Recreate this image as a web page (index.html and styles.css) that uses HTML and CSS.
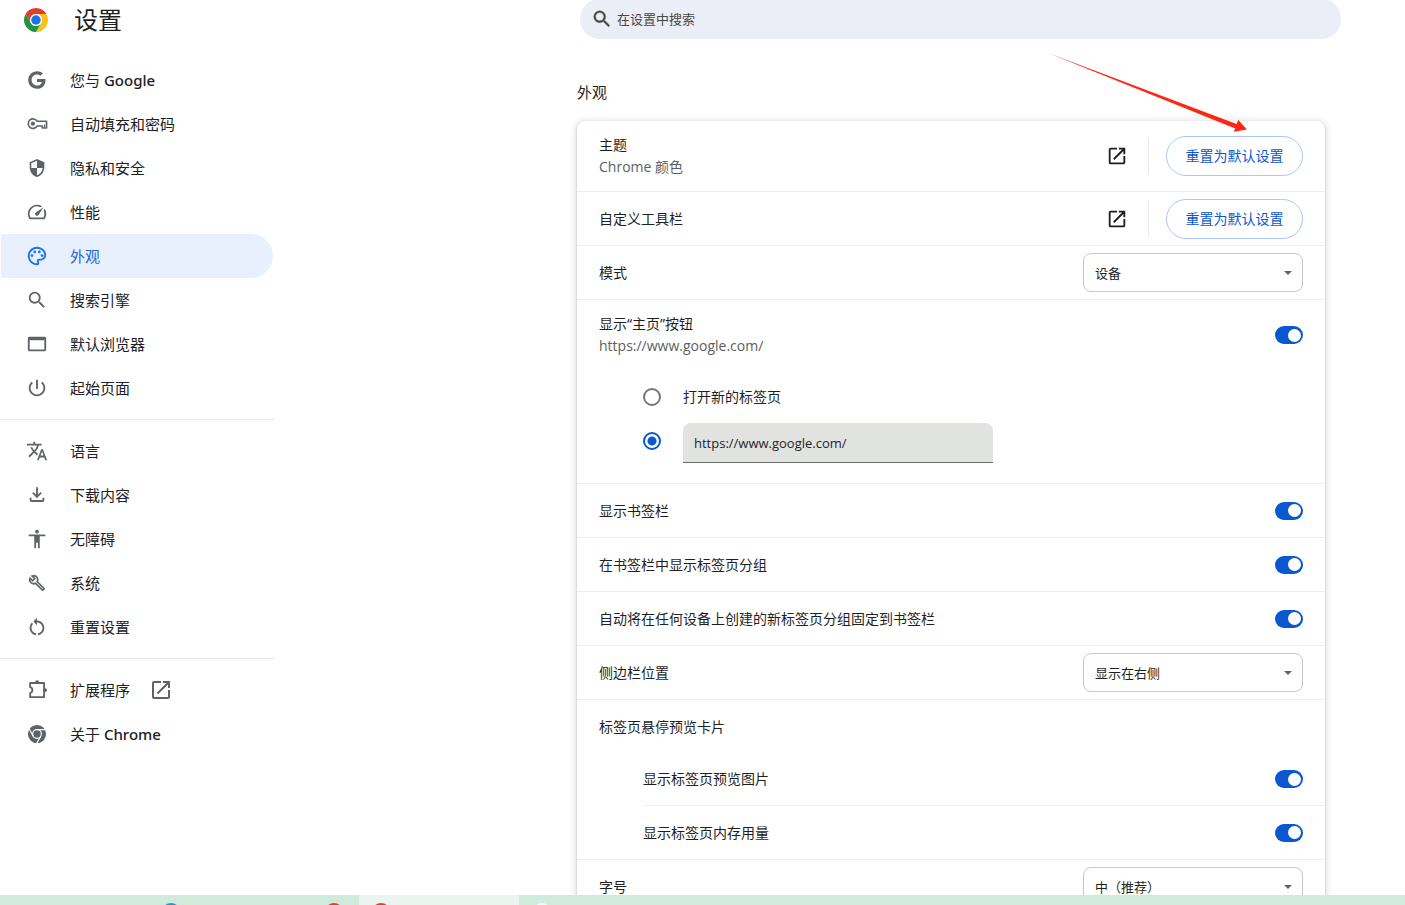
FILE: index.html
```html
<!DOCTYPE html>
<html lang="zh-CN">
<head>
<meta charset="utf-8">
<title>设置</title>
<link rel="stylesheet" href="styles.css">
</head>
<body>
<svg class="sprite" aria-hidden="true">
  <symbol id="open" viewBox="0 0 24 24"><path d="M19 19H5V5h7V3H5a2 2 0 0 0-2 2v14a2 2 0 0 0 2 2h14c1.1 0 2-.9 2-2v-7h-2v7zM14 3v2h3.59l-9.83 9.83 1.41 1.41L19 6.41V10h2V3h-7z"/></symbol>
  <symbol id="search" viewBox="0 0 24 24"><path d="M15.5 14h-.79l-.28-.27A6.47 6.47 0 0 0 16 9.5 6.5 6.5 0 1 0 9.5 16c1.61 0 3.09-.59 4.23-1.57l.27.28v.79l5 4.99L20.49 19l-4.99-5zm-6 0C7.01 14 5 11.99 5 9.5S7.01 5 9.5 5 14 7.01 14 9.5 11.99 14 9.5 14z"/></symbol>
</svg>
<div class="window">
  <header class="topbar">
    <div class="brand">
      <svg class="logo" viewBox="0 0 48 48" aria-hidden="true">
        <path fill="#e33b2e" d="M44.78 12A24 24 0 0 0 3.22 12L13.61 30A12 12 0 0 1 24 12z"/>
        <path fill="#fbc116" d="M44.78 12A24 24 0 0 1 24 48L34.39 30A12 12 0 0 0 24 12z"/>
        <path fill="#229342" d="M3.22 12A24 24 0 0 0 24 48L34.39 30A12 12 0 0 1 13.61 30z"/>
        <circle cx="24" cy="24" r="12" fill="#fff"/><circle cx="24" cy="24" r="9.5" fill="#1a73e8"/>
      </svg>
      <h1 class="title">设置</h1>
    </div>
    <div class="search-area">
      <label class="search">
        <svg class="search-icon" aria-hidden="true"><use href="#search"/></svg>
        <input class="search-input" type="search" placeholder="在设置中搜索" aria-label="在设置中搜索">
      </label>
    </div>
  </header>

  <div class="body">
    <nav class="menu" aria-label="设置">
      <a class="item" href="#google"><svg class="icon" viewBox="-1 -1 20 20"><path d="M16.58 8H9v2.75h4.47c-.24 1.2-1.42 3.27-4.47 3.27-2.72 0-4.93-2.25-4.93-5.02S6.28 3.98 9 3.98c1.54 0 2.57.66 3.17 1.22l2.19-2.12C12.97 1.79 11.16 1 9 1 4.58 1 1 4.58 1 9s3.58 8 8 8c4.62 0 7.68-3.25 7.68-7.82 0-.46-.04-.83-.1-1.18z"/></svg><span>您与 <span class="latin">Google</span></span></a>
      <a class="item" href="#autofill"><svg class="icon" viewBox="0 0 24 24"><g fill="none" stroke="currentColor" stroke-width="1.8"><path d="M12.2 9H22.4V16.4H17.8V14.2H12.2A5.2 5.2 0 1 1 12.2 9z" stroke-linejoin="round"/><path d="M20.2 12.5V16" stroke-width="1.2"/></g><circle cx="7.5" cy="11.6" r="2.3"/></svg><span>自动填充和密码</span></a>
      <a class="item" href="#privacy"><svg class="icon" viewBox="-1.5 -1.5 27 27"><path d="M12 1L3 5v6c0 5.55 3.84 10.74 9 12 5.16-1.26 9-6.45 9-12V5l-9-4zm0 10.99h7c-.53 4.12-3.28 7.79-7 8.94V12H5V6.3l7-3.11v8.8z"/></svg><span>隐私和安全</span></a>
      <a class="item" href="#performance"><svg class="icon" viewBox="0 0 24 24"><path d="M20.38 8.57l-1.23 1.85a8 8 0 0 1-.22 7.58H5.07A8 8 0 0 1 15.58 6.85l1.85-1.23A10 10 0 0 0 3.35 19a2 2 0 0 0 1.72 1h13.85a2 2 0 0 0 1.74-1 10 10 0 0 0-.27-10.44zm-9.79 6.84a2 2 0 0 0 2.83 0l5.66-8.49-8.49 5.66a2 2 0 0 0 0 2.83z"/></svg><span>性能</span></a>
      <a class="item item-active" href="#appearance" aria-current="page"><svg class="icon" viewBox="0 0 24 24"><path d="M12 22C6.49 22 2 17.51 2 12S6.49 2 12 2s10 4.04 10 9c0 3.31-2.69 6-6 6h-1.77c-.28 0-.5.22-.5.5 0 .12.05.23.13.33.41.47.64 1.06.64 1.67A2.5 2.5 0 0 1 12 22zm0-18c-4.41 0-8 3.59-8 8s3.59 8 8 8c.28 0 .5-.22.5-.5a.54.54 0 0 0-.14-.35c-.41-.46-.63-1.05-.63-1.65a2.5 2.5 0 0 1 2.5-2.5H16c2.21 0 4-1.79 4-4 0-3.86-3.59-7-8-7z"/><circle cx="6.5" cy="11.5" r="1.5"/><circle cx="9.5" cy="7.5" r="1.5"/><circle cx="14.5" cy="7.5" r="1.5"/><circle cx="17.5" cy="11.5" r="1.5"/></svg><span>外观</span></a>
      <a class="item" href="#engine"><svg class="icon"><use href="#search"/></svg><span>搜索引擎</span></a>
      <a class="item" href="#browser"><svg class="icon" viewBox="0 0 24 24"><path d="M20 4H4c-1.1 0-2 .9-2 2v12c0 1.1.9 2 2 2h16c1.1 0 2-.9 2-2V6c0-1.1-.9-2-2-2zm0 14H4V8h16v10z"/></svg><span>默认浏览器</span></a>
      <a class="item" href="#startup"><svg class="icon" viewBox="0 0 24 24"><path d="M13 3h-2v10h2V3zm4.83 2.17l-1.42 1.42C17.99 7.86 19 9.81 19 12c0 3.87-3.13 7-7 7s-7-3.13-7-7c0-2.19 1.01-4.14 2.58-5.42L6.17 5.17C4.23 6.82 3 9.26 3 12c0 4.97 4.03 9 9 9s9-4.03 9-9c0-2.74-1.23-5.18-3.17-6.83z"/></svg><span>起始页面</span></a>
      <hr class="divider">
      <a class="item" href="#language"><svg class="icon" viewBox="0 0 24 24"><path d="M12.87 15.07l-2.54-2.51.03-.03c1.74-1.94 2.98-4.17 3.71-6.53H17V4h-7V2H8v2H1v1.99h11.17C11.5 7.92 10.44 9.75 9 11.35 8.07 10.32 7.3 9.19 6.69 8h-2c.73 1.63 1.73 3.17 2.98 4.56l-5.09 5.02L4 19l5-5 3.11 3.11.76-2.04zM18.5 10h-2L12 22h2l1.12-3h4.75L21 22h2l-4.5-12zm-2.62 7l1.62-4.33L19.12 17h-3.24z"/></svg><span>语言</span></a>
      <a class="item" href="#downloads"><svg class="icon" viewBox="0 0 24 24"><path fill="none" stroke="currentColor" stroke-width="2" d="M12 3.500V14M7.500 9.500L12 14l4.500-4.500M5 15V17.500a1 1 0 0 0 1 1h12a1 1 0 0 0 1-1V15"/></svg><span>下载内容</span></a>
      <a class="item" href="#accessibility"><svg class="icon" viewBox="0 0 24 24"><path d="M12 2c1.100 0 2 .9 2 2s-.9 2-2 2-2-.9-2-2 .9-2 2-2zm9 7h-6v13h-2v-6h-2v6H9V9H3V7h18v2z"/></svg><span>无障碍</span></a>
      <a class="item" href="#system"><svg class="icon" viewBox="-3 -3 30 30"><path stroke="currentColor" stroke-width=".3" d="M22.61 18.99l-9.08-9.08c.93-2.34.45-5.1-1.44-7C9.79.61 6.21.4 3.66 2.26L7.5 6.11 6.08 7.52 2.25 3.69C.39 6.23.6 9.82 2.9 12.11c1.86 1.86 4.57 2.35 6.89 1.48l9.11 9.11c.39.39 1.02.39 1.41 0l2.3-2.3c.4-.38.4-1.01 0-1.41zm-3 1.6l-9.46-9.46c-.61.45-1.29.72-2 .82-1.36.2-2.79-.21-3.83-1.25C3.37 9.76 2.93 8.5 3 7.26l3.09 3.09 4.24-4.24-3.09-3.09c1.24-.07 2.49.37 3.44 1.31 1.08 1.08 1.49 2.57 1.24 3.96-.12.71-.42 1.37-.88 1.96l9.45 9.45-.88.89z"/></svg><span>系统</span></a>
      <a class="item" href="#reset"><svg class="icon" viewBox="0 0 24 24"><path d="M12 5V2L8 6l4 4V7c3.31 0 6 2.69 6 6 0 2.97-2.17 5.43-5 5.91v2.02c3.95-.49 7-3.85 7-7.93 0-4.42-3.58-8-8-8zm-6 8c0-1.65.67-3.15 1.76-4.24L6.34 7.34C4.9 8.79 4 10.79 4 13c0 4.08 3.05 7.44 7 7.93v-2.02c-2.83-.48-5-2.94-5-5.91z"/></svg><span>重置设置</span></a>
      <hr class="divider">
      <a class="item" href="#extensions"><svg class="icon" viewBox="0 0 24 24"><path fill="none" stroke="currentColor" stroke-width="2" stroke-linejoin="round" d="M4.500 4.400H19.700V19.800H4.500V15.300c1.500-.4 2.500-1.700 2.500-3.200S6 9.300 4.500 8.900z"/><circle cx="12.100" cy="3.400" r="2.100"/><circle cx="20.800" cy="12.100" r="2.100"/></svg><span>扩展程序</span><svg class="icon-open"><use href="#open"/></svg></a>
      <a class="item" href="#about"><svg class="icon" viewBox="-5 -5 58 58"><circle cx="24" cy="24" r="24"/><circle cx="24" cy="24" r="11.500" fill="none" stroke="#fff" stroke-width="3"/><path stroke="#fff" stroke-width="3" d="M24 12.500H46M14 29.800L3.500 11M34 29.800L23.500 48"/></svg><span>关于 <span class="latin">Chrome</span></span></a>
    </nav>

    <main class="content">
      <section class="section">
        <h2 class="heading">外观</h2>
        <div class="card">
          <svg class="arrow" viewBox="0 0 200 80" aria-hidden="true"><path fill="#ff2512" d="M0 0L188.500 71 190.300 67 199 76.500 185.700 78.700 187.300 75.500z"/></svg>
          <div class="row row-tall">
            <div class="text"><div>主题</div><div class="sub">Chrome 颜色</div></div>
            <div class="actions">
              <button class="open-button" type="button" aria-label="打开主题"><svg class="open-icon"><use href="#open"/></svg></button>
              <span class="bar"></span>
              <button class="pill" type="button">重置为默认设置</button>
            </div>
          </div>
          <div class="row">
            <div class="text">自定义工具栏</div>
            <div class="actions">
              <button class="open-button" type="button" aria-label="打开自定义工具栏"><svg class="open-icon"><use href="#open"/></svg></button>
              <span class="bar"></span>
              <button class="pill" type="button">重置为默认设置</button>
            </div>
          </div>
          <div class="row">
            <label class="text" for="mode">模式</label>
            <div class="picker"><select class="select" id="mode"><option>设备</option></select></div>
          </div>
          <div class="group">
            <div class="row row-home">
              <label class="text" for="home"><span class="line">显示“主页”按钮</span><span class="line sub">https://www.google.com/</span></label>
              <input class="toggle" id="home" type="checkbox" checked>
            </div>
            <div class="options">
              <label class="option"><input class="radio" type="radio" name="home-page"><span>打开新的标签页</span></label>
              <div class="option"><input class="radio" type="radio" name="home-page" aria-label="自定义网址" checked><input class="url" type="text" aria-label="网址" value="https://www.google.com/"></div>
            </div>
          </div>
          <div class="row">
            <label class="text" for="bookmarks">显示书签栏</label>
            <input class="toggle" id="bookmarks" type="checkbox" checked>
          </div>
          <div class="row">
            <label class="text" for="groups">在书签栏中显示标签页分组</label>
            <input class="toggle" id="groups" type="checkbox" checked>
          </div>
          <div class="row">
            <label class="text" for="pin">自动将在任何设备上创建的新标签页分组固定到书签栏</label>
            <input class="toggle" id="pin" type="checkbox" checked>
          </div>
          <div class="row">
            <label class="text" for="side">侧边栏位置</label>
            <div class="picker"><select class="select" id="side"><option>显示在右侧</option></select></div>
          </div>
          <div class="group">
            <div class="row row-nested"><div class="text">标签页悬停预览卡片</div></div>
            <div class="nested">
              <div class="row row-nested row-lined">
                <label class="text" for="preview">显示标签页预览图片</label>
                <input class="toggle" id="preview" type="checkbox" checked>
              </div>
              <div class="row row-nested">
                <label class="text" for="memory">显示标签页内存用量</label>
                <input class="toggle" id="memory" type="checkbox" checked>
              </div>
            </div>
          </div>
          <div class="row">
            <label class="text" for="size">字号</label>
            <div class="picker"><select class="select" id="size"><option>中（推荐）</option></select></div>
          </div>
        </div>
      </section>
    </main>
  </div>

  <footer class="taskbar">
    <svg width="600" height="10" aria-hidden="true">
      <rect x="359" width="160" height="10" fill="#ebf5f0"/>
      <circle cx="171" cy="17" r="9" fill="#2f8fd8"/>
      <circle cx="334" cy="17" r="9" fill="#e2402f"/>
      <circle cx="381" cy="17" r="9" fill="#e2402f"/>
      <circle cx="542" cy="17" r="9" fill="#f6f8f7"/>
    </svg>
  </footer>
</div>
</body>
</html>
```
FILE: styles.css
```css
* {
  box-sizing: border-box;
}

body {
  margin: 0;
  background: #fff;
  color: #1f1f1f;
  font: 14px/22px "Noto Sans", "Noto Sans CJK SC", sans-serif;
}

input,
select,
button {
  font: inherit;
  color: inherit;
  margin: 0;
}

.sprite {
  display: none;
}

.window {
  display: flex;
  flex-direction: column;
  height: 100vh;
  overflow: hidden;
}

.topbar {
  display: flex;
  flex: none;
}

.brand {
  display: flex;
  align-items: center;
  gap: 26px;
  flex: none;
  width: 516px;
  height: 40px;
  padding-left: 24px;
}

.logo {
  width: 24px;
  height: 24px;
}

.title {
  margin: 0;
  font-size: 24px;
  font-weight: 400;
}

.search-area {
  flex: 1;
  min-width: 0;
}

.search {
  display: flex;
  align-items: center;
  gap: 4px;
  max-width: 761px;
  height: 40px;
  margin: -1px auto 0;
  padding: 0 20px 0 11px;
  border-radius: 20px;
  background: #ebeef7;
}

.search-icon {
  flex: none;
  width: 22px;
  height: 22px;
  fill: #474747;
  stroke: #474747;
  stroke-width: .4;
}

.search-input {
  flex: 1;
  min-width: 0;
  padding: 0;
  border: 0;
  outline: 0;
  background: none;
  font-size: 13px;
}

.search-input::placeholder {
  color: #474747;
  opacity: 1;
}

.body {
  display: flex;
  flex: 1;
  min-height: 0;
}

.menu {
  flex: none;
  width: 275px;
  padding-top: 18px;
}

.item {
  display: flex;
  align-items: center;
  height: 44px;
  margin: 0 2px 0 1px;
  padding-left: 25px;
  border-radius: 0 22px 22px 0;
  color: #202124;
  font-size: 15px;
  text-decoration: none;
}

.item-active {
  background: #e8f0fe;
  color: #1967d2;
}

.latin {
  font-weight: 500;
}

.icon {
  flex: none;
  width: 22px;
  height: 22px;
  margin-right: 22px;
  color: #5f6368;
  fill: currentColor;
}

.item-active .icon {
  color: #1a73e8;
}

.icon-open {
  width: 24px;
  height: 24px;
  margin-left: 19px;
  fill: #5f6368;
}

.divider {
  height: 1px;
  margin: 9px 0;
  border: 0;
  background: #e8eaed;
}

.content {
  flex: 1;
  min-width: 0;
  padding: 0 0 0 222px;
}

.section {
  max-width: 748px;
  margin: 0 auto;
  padding-top: 41px;
}

.heading {
  margin: 0 0 18px;
  font-size: 15px;
  font-weight: 400;
}

.card {
  position: relative;
  border-radius: 8px;
  background: #fff;
  box-shadow: 0 1px 2px rgba(60, 64, 67, .3), 0 1px 6px 2px rgba(60, 64, 67, .15);
}

.arrow {
  position: absolute;
  top: -68px;
  right: 77px;
  width: 200px;
  height: 80px;
  pointer-events: none;
}

.row {
  display: flex;
  align-items: center;
  justify-content: space-between;
  gap: 20px;
  min-height: 54px;
  padding: 0 22px;
  border-bottom: 1px solid #eee;
}

.row-tall {
  min-height: 71px;
}

.row-home {
  min-height: 70px;
}

.row-nested {
  min-height: 53px;
  border-bottom: 0;
}

.row-lined,
.group {
  border-bottom: 1px solid #eee;
}

.group > .row {
  border-bottom: 0;
}

.nested {
  margin-left: 66px;
}

.nested .row {
  padding-left: 0;
}

.line {
  display: block;
}

.sub {
  color: #5c5e60;
  font-family: "Open Sans", "Noto Sans CJK SC", sans-serif;
}

.actions {
  display: flex;
  align-items: center;
}

.open-button {
  display: flex;
  padding: 9px;
  border: 0;
  background: none;
}

.open-icon {
  width: 22px;
  height: 22px;
  fill: #1f1f1f;
}

.bar {
  width: 1px;
  height: 36px;
  margin: 0 17px 0 11px;
  background: #e8eaed;
}

.pill {
  min-width: 137px;
  height: 40px;
  padding: 0 18px;
  border: 1px solid #a8c7fa;
  border-radius: 20px;
  background: #fff;
  color: #0b57d0;
}

.picker {
  position: relative;
  width: 220px;
}

.picker::after {
  content: "";
  position: absolute;
  top: 18px;
  right: 11px;
  border: 4px solid transparent;
  border-top-color: #5f6368;
  border-bottom: 0;
  pointer-events: none;
}

.select {
  display: block;
  appearance: none;
  width: 100%;
  height: 39px;
  padding: 0 28px 0 11px;
  border: 1px solid #c7c7c7;
  border-radius: 8px;
  background: #fff;
  font-size: 13px;
}

.toggle {
  appearance: none;
  display: flex;
  align-items: center;
  justify-content: flex-end;
  flex: none;
  width: 28px;
  height: 18px;
  padding: 2px;
  border-radius: 9px;
  background: #0b57d0;
}

.toggle::before {
  content: "";
  width: 13px;
  height: 13px;
  border-radius: 50%;
  background: #fff;
}

.toggle:not(:checked) {
  justify-content: flex-start;
  background: #747775;
}

.options {
  padding: 5px 22px 20px 66px;
}

.option {
  display: flex;
  align-items: center;
  gap: 22px;
  min-height: 44px;
}

.radio {
  appearance: none;
  flex: none;
  width: 18px;
  height: 18px;
  border: 2px solid #747775;
  border-radius: 50%;
}

.radio:checked {
  border-color: #0b57d0;
  background: radial-gradient(circle, #0b57d0 4px, #fff 5px);
}

.url {
  width: 310px;
  height: 40px;
  margin-top: 4px;
  padding: 0 11px;
  border: 0;
  border-bottom: 1px solid #6b6d6c;
  border-radius: 8px 8px 0 0;
  background: #e1e3e1;
  font-family: "Open Sans", sans-serif;
  font-size: 13px;
}

.taskbar {
  position: relative;
  z-index: 1;
  flex: none;
  height: 10px;
  background: #d0ebdc;
}

.taskbar svg {
  display: block;
}
```
